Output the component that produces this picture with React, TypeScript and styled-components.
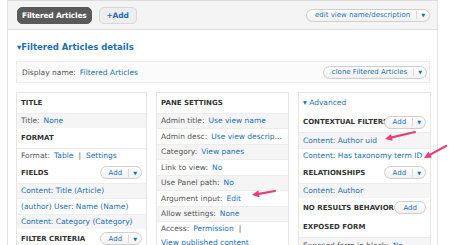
import * as React from "react";
import { styled, createGlobalStyle } from "styled-components";

const GlobalStyle = createGlobalStyle`
  body {
    margin: 0;
    background: #fff;
    font-family: "DejaVu Sans", "Liberation Sans", sans-serif;
    overflow: hidden;
  }
`;

const link = "#1a6fb8";

const Page = styled.div`
  position: relative;
  width: 450px;
  height: 245px;
  overflow: hidden;
`;

const Frame = styled.div`
  margin-left: 7px;
  width: 429px;
  height: 245px;
  border-left: 1px solid #e3e3e3;
  border-right: 1px solid #e3e3e3;
`;

const TopBar = styled.div`
  height: 28px;
  display: flex;
  align-items: center;
  gap: 7px;
  padding: 0 7px 0 9px;
  background: #f4f4f4;
  border-top: 1px solid #dcdcdc;
  border-bottom: 1px solid #dedede;
`;

const Tab = styled.div<{ $active?: boolean }>`
  height: 15px;
  display: flex;
  align-items: center;
  padding: 0 4px;
  border-radius: 5px;
  font-size: 7.5px;
  font-weight: bold;
  letter-spacing: -0.2px;
  background: ${(p) => (p.$active ? "#5a5a5a" : "#eeeeee")};
  color: ${(p) => (p.$active ? "#fff" : link)};
  border: 1px solid ${(p) => (p.$active ? "#5a5a5a" : "#d8d8d8")};
`;

const AddTab = styled(Tab)`
  padding: 0 7px;
`;

const Spacer = styled.div`
  flex: 1;
`;

const Pill = styled.div`
  display: flex;
  align-items: center;
  height: 11px;
  border: 1px solid #cfcfcf;
  border-radius: 7px;
  background: linear-gradient(#ffffff, #f1f1f1);
  font-size: 7px;
  font-weight: normal;
  color: ${link};
  flex-shrink: 0;
  position: relative;
  z-index: 1;
`;

const PillLabel = styled.span<{ $solo?: boolean }>`
  padding: ${(p) => (p.$solo ? "0 8px" : "0 6px 0 8px")};
`;

const PillDrop = styled.span`
  display: flex;
  align-items: center;
  height: 8px;
  padding: 0 4px;
  border-left: 1px solid #dadada;
  font-size: 5px;
`;

const Details = styled.div`
  padding: 0 5px 0 8px;
`;

const DetailsTitle = styled.div`
  height: 28px;
  display: flex;
  align-items: center;
  padding: 3px 0 0 1px;
  font-size: 8.5px;
  font-weight: bold;
  color: ${link};
`;

const DisplayBox = styled.div`
  height: 20px;
  margin-right: 2px;
  display: flex;
  align-items: center;
  padding: 0 2px 0 5px;
  border: 1px solid #ececec;
  background: #fbfbfb;
  font-size: 7.5px;
`;

const Label = styled.span`
  color: #555;
  margin-right: 4px;
`;

const Link = styled.span`
  color: ${link};
`;

const Columns = styled.div`
  display: grid;
  grid-template-columns: 131px 133px 133px;
  column-gap: 9px;
  margin-top: 9px;
`;

const Column = styled.div`
  border: 1px solid #e6e6e6;
  border-bottom: none;
  height: 160px;
  overflow: hidden;
`;

const Head = styled.div`
  height: 19.5px;
  box-sizing: border-box;
  display: flex;
  align-items: center;
  padding: 0 4px;
  font-size: 7px;
  font-weight: bold;
  color: #333;
  white-space: nowrap;
`;

const HeadText = styled.span`
  flex: 1;
  min-width: 0;
`;

const Advanced = styled.div`
  height: 19.5px;
  display: flex;
  align-items: center;
  padding: 0 4px;
  font-size: 7.5px;
  color: ${link};
`;

const Row = styled.div<{ $shade?: boolean }>`
  min-height: 15.5px;
  box-sizing: border-box;
  display: flex;
  flex-wrap: wrap;
  align-items: center;
  padding: 0 4px;
  border-top: 1px solid #ededed;
  background: ${(p) => (p.$shade ? "#f5f5f5" : "#fff")};
  font-size: 7.5px;
  white-space: nowrap;
  line-height: 13.5px;
`;

const Sep = styled.span`
  color: #555;
  margin: 0 5px;
`;

const WrapLink = styled(Link)`
  flex-basis: 100%;
`;

const Overlay = styled.svg`
  position: absolute;
  left: 0;
  top: 0;
  pointer-events: none;
`;

function AddButton({ drop = true }: { drop?: boolean }) {
  return (
    <Pill>
      <PillLabel $solo={!drop}>Add</PillLabel>
      {drop && <PillDrop>▼</PillDrop>}
    </Pill>
  );
}

function Setting({ label, value, shade }: { label: string; value: string; shade?: boolean }) {
  return (
    <Row $shade={shade}>
      <Label>{label}</Label>
      <Link>{value}</Link>
    </Row>
  );
}

function Arrow({ x1, y1, x2, y2 }: { x1: number; y1: number; x2: number; y2: number }) {
  const a = Math.atan2(y2 - y1, x2 - x1);
  const len = 7;
  const w = 3.5;
  const bx = x2 - Math.cos(a) * len;
  const by = y2 - Math.sin(a) * len;
  const px = -Math.sin(a) * w;
  const py = Math.cos(a) * w;
  return (
    <g>
      <line x1={x1} y1={y1} x2={bx} y2={by} stroke="#ee3b78" strokeWidth={2.2} strokeLinecap="round" />
      <polygon points={`${x2},${y2} ${bx + px},${by + py} ${bx - px},${by - py}`} fill="#ee3b78" />
    </g>
  );
}

export default function App() {
  return (
    <Page>
      <GlobalStyle />
      <Frame>
        <TopBar>
          <Tab $active>Filtered Articles</Tab>
          <AddTab>+Add</AddTab>
          <Spacer />
          <Pill>
            <PillLabel>edit view name/description</PillLabel>
            <PillDrop>▼</PillDrop>
          </Pill>
        </TopBar>
        <Details>
          <DetailsTitle>▾Filtered Articles details</DetailsTitle>
          <DisplayBox>
            <Label>Display name:</Label>
            <Link>Filtered Articles</Link>
            <Spacer />
            <Pill>
              <PillLabel>clone Filtered Articles</PillLabel>
              <PillDrop>▼</PillDrop>
            </Pill>
          </DisplayBox>
          <Columns>
            <Column>
              <Head>
                <HeadText>TITLE</HeadText>
              </Head>
              <Setting shade label="Title:" value="None" />
              <Head>
                <HeadText>FORMAT</HeadText>
              </Head>
              <Row>
                <Label>Format:</Label>
                <Link>Table</Link>
                <Sep>|</Sep>
                <Link>Settings</Link>
              </Row>
              <Head>
                <HeadText>FIELDS</HeadText>
                <AddButton />
              </Head>
              <Row $shade>
                <Link>Content: Title (Article)</Link>
              </Row>
              <Row>
                <Link>(author) User: Name (Name)</Link>
              </Row>
              <Row $shade>
                <Link>Content: Category (Category)</Link>
              </Row>
              <Head>
                <HeadText>FILTER CRITERIA</HeadText>
                <AddButton />
              </Head>
            </Column>
            <Column>
              <Head>
                <HeadText>PANE SETTINGS</HeadText>
              </Head>
              <Setting shade label="Admin title:" value="Use view name" />
              <Setting label="Admin desc:" value="Use view descrip..." />
              <Setting shade label="Category:" value="View panes" />
              <Setting label="Link to view:" value="No" />
              <Setting shade label="Use Panel path:" value="No" />
              <Setting label="Argument input:" value="Edit" />
              <Setting shade label="Allow settings:" value="None" />
              <Row>
                <Label>Access:</Label>
                <Link>Permission</Link>
                <Sep>|</Sep>
                <WrapLink>View published content</WrapLink>
              </Row>
            </Column>
            <Column>
              <Advanced>▾ Advanced</Advanced>
              <Head>
                <HeadText>CONTEXTUAL FILTERS</HeadText>
                <AddButton />
              </Head>
              <Row $shade>
                <Link>Content: Author uid</Link>
              </Row>
              <Row>
                <Link>Content: Has taxonomy term ID</Link>
              </Row>
              <Head>
                <HeadText>RELATIONSHIPS</HeadText>
                <AddButton />
              </Head>
              <Row $shade>
                <Link>Content: Author</Link>
              </Row>
              <Head>
                <HeadText>NO RESULTS BEHAVIOR</HeadText>
                <AddButton drop={false} />
              </Head>
              <Head>
                <HeadText>EXPOSED FORM</HeadText>
              </Head>
              <Setting shade label="Exposed form in block:" value="No" />
            </Column>
          </Columns>
        </Details>
      </Frame>
      <Overlay width={450} height={245} viewBox="0 0 450 245">
        <Arrow x1={275} y1={191} x2={252} y2={195} />
        <Arrow x1={415} y1={132} x2={385} y2={139} />
        <Arrow x1={446} y1={146} x2={424} y2={158} />
      </Overlay>
    </Page>
  );
}
